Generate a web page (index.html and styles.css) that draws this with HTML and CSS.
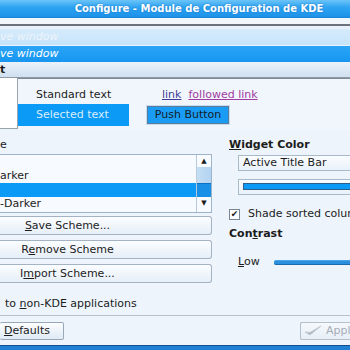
FILE: index.html
```html
<!DOCTYPE html>
<html lang="fr">

<head>
    <meta charset="UTF-8">
    <meta name="viewport" content="width=device-width, initial-scale=1.0">
    <title>Configure - Module de Configuration de KDE</title>
    <link rel="stylesheet" href="styles.css">
</head>

<body>
    <div class="window">
        <div class="titlebar">Configure - Module de Configuration de KDE</div>
        <div class="toolbar-gap"></div>

        <div class="preview">
            <div class="wbar inactive">ve window</div>
            <div class="wbar active">ve window</div>
            <div class="menubar">t</div>
            <div class="client">
                <div class="client-side"></div>
                <div class="client-main">
                    <div class="sample-row">
                        <span class="std">Standard text</span>
                        <span class="link">link</span>
                        <span class="visited">followed link</span>
                    </div>
                    <div class="sample-row second">
                        <span class="selected">Selected text</span>
                        <span class="push">Push Button</span>
                    </div>
                </div>
            </div>
        </div>

        <div class="columns">
            <div class="left">
                <div class="label">e</div>
                <div class="listbox">
                    <div class="items">
                        <div class="item"></div>
                        <div class="item">arker</div>
                        <div class="item current"></div>
                        <div class="item">-Darker</div>
                    </div>
                    <div class="scrollbar">
                        <div class="arrow">&#9650;</div>
                        <div class="track"></div>
                        <div class="thumb"></div>
                        <div class="arrow">&#9660;</div>
                    </div>
                </div>
                <div class="scheme-btn"><u>S</u>ave Scheme...</div>
                <div class="scheme-btn">R<u>e</u>move Scheme</div>
                <div class="scheme-btn">I<u>m</u>port Scheme...</div>
            </div>

            <div class="right">
                <div class="label bold"><u>W</u>idget Color</div>
                <div class="combo">Active Title Bar</div>
                <div class="color-btn"><div class="swatch"></div></div>
                <div class="check-row">
                    <span class="checkbox">&#10004;</span>
                    <span>Shade sorted columns in lists</span>
                </div>
                <div class="label bold contrast">Con<u>t</u>rast</div>
                <div class="slider-row">
                    <span><u>L</u>ow</span>
                    <div class="slider"></div>
                </div>
            </div>
        </div>

        <div class="apply-text">to <u>n</u>on-KDE applications</div>
        <div class="separator"></div>

        <div class="button-row">
            <div class="dlg-btn defaults"><u>D</u>efaults</div>
            <div class="dlg-btn apply disabled">
                <svg width="18" height="12" viewBox="0 0 18 12">
                    <path d="M1 7 L6 10 L17 1 L6 7.5 Z" fill="#a9b1ba" stroke="#c4cbd3" stroke-width="1" />
                </svg>
                <span>Apply</span>
            </div>
        </div>

        <div class="bottom-frame"></div>
    </div>
</body>

</html>
```

FILE: styles.css
```css
body {
    margin: 0;
    background-color: #edf4fb;
    font-family: "DejaVu Sans", "Liberation Sans", sans-serif;
    font-size: 11px;
    color: #1c1c1c;
}

.window {
    width: 350px;
    height: 350px;
    overflow: hidden;
    display: flex;
    flex-direction: column;
}

.titlebar {
    height: 18px;
    line-height: 18px;
    padding-left: 48px;
    text-align: center;
    white-space: nowrap;
    color: white;
    font-size: 10px;
    font-weight: bold;
    text-shadow: 0 0 2px #1670c0;
    background: linear-gradient(#6cc4f8, #2fa4f2 40%, #1d94ea 90%, #1a7fd0);
}

.toolbar-gap {
    height: 6px;
    background-color: #f1f6fb;
    border-bottom: 2px solid #6c737c;
}

.preview {
    padding-top: 3px;
    background-color: #e9f1f9;
}

.wbar {
    height: 16px;
    line-height: 16px;
    font-style: italic;
    white-space: nowrap;
}

.inactive {
    background: linear-gradient(#d6ebfc, #c6e3fa);
    color: #eef4fa;
}

.active {
    margin-top: 1px;
    background: linear-gradient(#2aa4f7, #1796f0);
    color: white;
}

.menubar {
    height: 14px;
    line-height: 14px;
    margin-top: 1px;
    font-weight: bold;
    background: linear-gradient(#e9f1f9, #cfe0f1);
    border-bottom: 1px solid #8f9aa6;
}

.client {
    display: flex;
    height: 52px;
}

.client-side {
    width: 17px;
    height: 50px;
    background-color: white;
    border-right: 1px solid #9aa4ae;
    border-bottom: 1px solid #9aa4ae;
}

.client-main {
    flex: 1;
    background-color: #f1f6fc;
    border-top: 1px solid #7f8a96;
    padding-top: 9px;
}

.sample-row {
    display: flex;
    align-items: center;
    white-space: nowrap;
    line-height: 14px;
}

.std {
    width: 93px;
    padding-left: 18px;
}

.link {
    margin-left: 33px;
    color: #3d3d99;
    text-decoration: underline;
}

.visited {
    margin-left: 7px;
    color: #a03ca0;
    text-decoration: underline;
}

.second {
    margin-top: 2px;
    height: 22px;
}

.selected {
    width: 93px;
    height: 22px;
    line-height: 22px;
    padding-left: 18px;
    background-color: #0b9af6;
    color: #d9edfd;
}

.push {
    margin-left: 18px;
    width: 80px;
    height: 16px;
    line-height: 16px;
    text-align: center;
    background-color: #1a9cf4;
    border: 1px solid #5c7c98;
    box-shadow: 0 0 0 1px #c6dcef;
    color: #161c28;
}

.columns {
    display: flex;
    gap: 17px;
    padding-top: 8px;
}

.left {
    flex: none;
    width: 212px;
}

.right {
    flex: 1;
    min-width: 0;
    overflow: hidden;
    white-space: nowrap;
}

.label {
    line-height: 14px;
    height: 14px;
}

.bold {
    font-weight: bold;
}

.listbox {
    margin-top: 2px;
    height: 57px;
    display: flex;
    border: 1px solid #9db4cb;
    border-left: none;
    background-color: #f7fafe;
}

.items {
    flex: 1;
}

.item {
    height: 14px;
    line-height: 14px;
    white-space: nowrap;
}

.item.current {
    background-color: #0b9af6;
}

.scrollbar {
    width: 14px;
    display: flex;
    flex-direction: column;
    border-left: 1px solid #b7c9da;
}

.arrow {
    height: 12px;
    font-size: 7px;
    line-height: 12px;
    text-align: center;
    color: #202020;
    background-color: #f7fafe;
}

.track {
    height: 16px;
    background: linear-gradient(90deg, #c4def5, #b2d3f1);
}

.thumb {
    height: 14px;
    background-color: #1a8fe6;
    border-top: 1px solid #0d70c0;
    box-sizing: border-box;
}

.scheme-btn {
    margin-top: 5px;
    height: 17px;
    line-height: 17px;
    padding-right: 76px;
    text-align: center;
    white-space: nowrap;
    border: 1px solid #a3b3c3;
    border-left: none;
    border-radius: 0 3px 3px 0;
    background: linear-gradient(#fbfdff, #e6eef7);
}

.listbox + .scheme-btn {
    margin-top: 3px;
}

.combo {
    margin: 3px 0 0 9px;
    height: 14px;
    line-height: 14px;
    padding-left: 4px;
    border: 1px solid #a8b9ca;
    border-right: none;
    background: linear-gradient(#fbfdff, #e9f1f9);
}

.color-btn {
    margin: 8px 0 0 9px;
    height: 11px;
    padding: 3px 0 0 4px;
    border: 1px solid #a8b9ca;
    border-right: none;
    background: linear-gradient(#fbfdff, #e9f1f9);
}

.swatch {
    height: 5px;
    background-color: #0b9af6;
    border: 1px solid #2f5f8c;
    border-right: none;
}

.check-row {
    margin-top: 13px;
    display: flex;
    align-items: center;
    gap: 8px;
    line-height: 12px;
}

.checkbox {
    flex: none;
    width: 9px;
    height: 9px;
    border: 1px solid #7a8796;
    background-color: white;
    font-size: 9px;
    line-height: 9px;
    text-align: center;
    color: #1a1a1a;
}

.contrast {
    margin-top: 7px;
}

.slider-row {
    margin: 14px 0 0 9px;
    display: flex;
    align-items: center;
    line-height: 14px;
}

.slider {
    margin-left: 14px;
    flex: 1;
    height: 3px;
    background-color: #2a8fdc;
    border-top: 1px solid #4aa4e8;
    border-bottom: 1px solid #1d6aa8;
    border-radius: 2px 0 0 2px;
}

.apply-text {
    margin-top: 14px;
    padding-left: 5px;
    line-height: 14px;
}

.separator {
    margin-top: 4px;
    height: 1px;
    background-color: #b5c1cd;
}

.button-row {
    margin-top: 6px;
    display: flex;
    justify-content: space-between;
}

.dlg-btn {
    height: 16px;
    line-height: 16px;
    border: 1px solid #98a8b8;
    border-radius: 2px;
    background: linear-gradient(#fcfdff, #dfeaf5);
}

.defaults {
    width: 59px;
    padding-left: 4px;
    border-left: none;
}

.apply {
    flex: none;
    width: 80px;
    margin-right: -34px;
    display: flex;
    align-items: center;
    gap: 4px;
    padding-left: 3px;
    border-right: none;
}

.disabled {
    color: #a4adb7;
    background: linear-gradient(#f6f9fc, #e6eef6);
    border-color: #b4c0cc;
}

.bottom-frame {
    margin-top: auto;
    height: 4px;
    background-color: #1f7fd2;
    border-top: 1px solid #124f8e;
}
```
